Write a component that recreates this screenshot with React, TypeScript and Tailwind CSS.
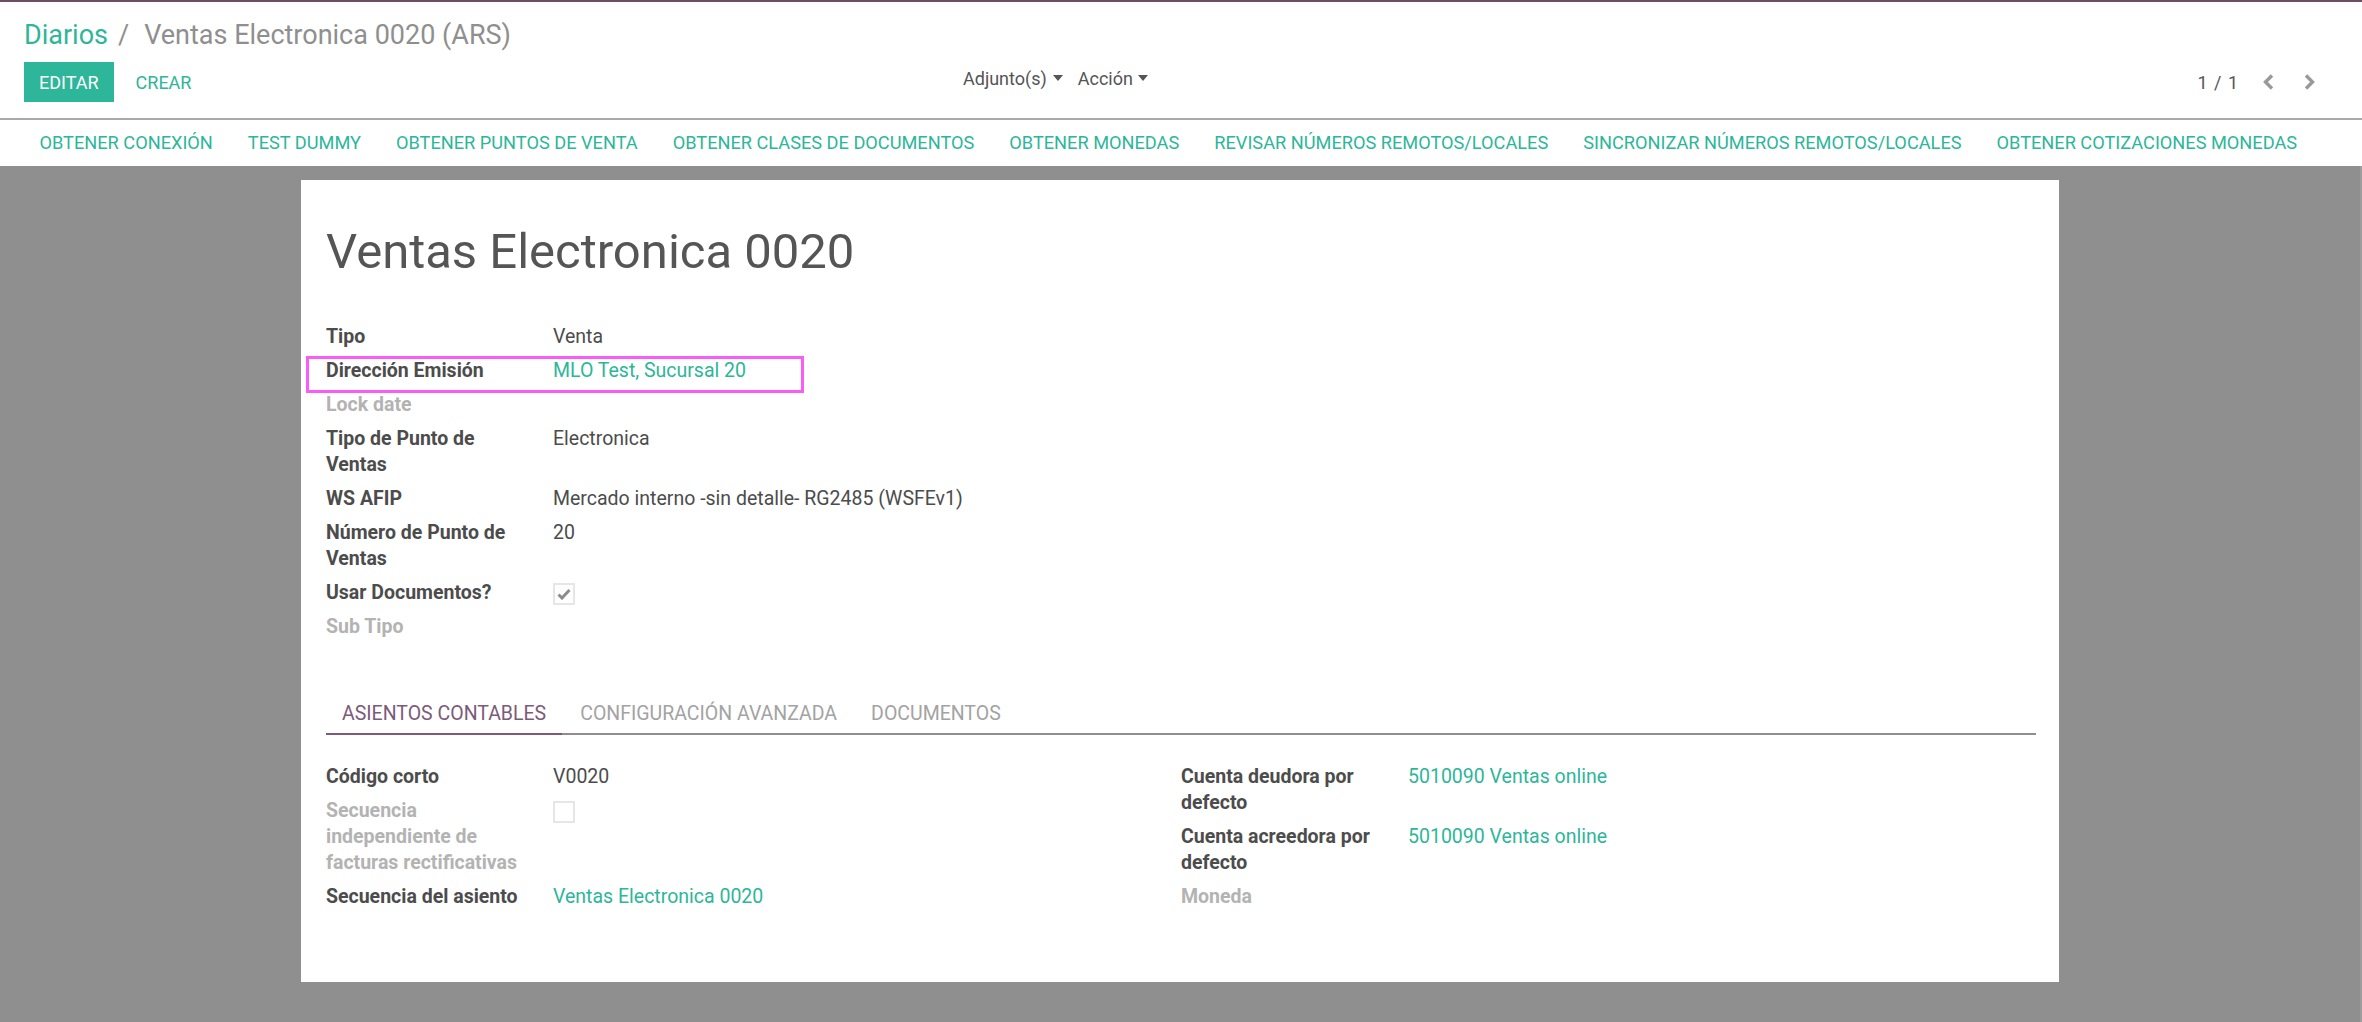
import React from 'react';

type FieldProps = {
  label: string[];
  muted?: boolean;
  children?: React.ReactNode;
};

// one form row: bold label column + value column (labels carry their own line breaks)
function Field({ label, muted, children }: FieldProps) {
  return (
    <div className="flex py-[4px] leading-[26px]">
      <div className={`w-[227px] shrink-0 pr-[20px] font-bold ${muted ? 'text-[#b3b3b3]' : 'text-[#4c4c4c]'}`}>
        {label.map((l) => (
          <div key={l} className="whitespace-nowrap">{l}</div>
        ))}
      </div>
      <div className="flex-1 text-[#4c4c4c]">{children}</div>
    </div>
  );
}

function Check({ checked }: { checked?: boolean }) {
  return (
    <div className="mt-[3px] flex h-[22px] w-[22px] items-center justify-center border-2 border-[#e6e6e6] bg-white">
      {checked && (
        <svg width="14" height="12" viewBox="0 0 14 12">
          <path d="M1.5 6.5 L5 10 L12.5 2" fill="none" stroke="#8c8c8c" strokeWidth="3" />
        </svg>
      )}
    </div>
  );
}

function Caret() {
  return (
    <svg width="10" height="6" viewBox="0 0 10 6" className="inline-block">
      <path d="M0 0 L10 0 L5 6 Z" fill="#555" />
    </svg>
  );
}

function Chevron({ dir }: { dir: 'left' | 'right' }) {
  return (
    <svg width="11" height="16" viewBox="0 0 11 16">
      <path
        d={dir === 'left' ? 'M9 1.5 L2.5 8 L9 14.5' : 'M2 1.5 L8.5 8 L2 14.5'}
        fill="none"
        stroke="#999"
        strokeWidth="3.4"
      />
    </svg>
  );
}

const actions = [
  'OBTENER CONEXIÓN',
  'TEST DUMMY',
  'OBTENER PUNTOS DE VENTA',
  'OBTENER CLASES DE DOCUMENTOS',
  'OBTENER MONEDAS',
  'REVISAR NÚMEROS REMOTOS/LOCALES',
  'SINCRONIZAR NÚMEROS REMOTOS/LOCALES',
  'OBTENER COTIZACIONES MONEDAS',
];

const link = 'text-[#2db699]';

export default function App() {
  return (
    <div className="flex h-[1022px] w-[2362px] flex-col overflow-hidden bg-white font-['Roboto',sans-serif] text-[18px] text-[#4c4c4c]">
      <div className="h-[2px] bg-[#6d4c64]" />

      {/* control panel */}
      <div className="pl-[24px] pt-[18px]">
        <div className="text-[27px] leading-[30px]">
          <span className={link}>Diarios</span>
          <span className="pl-[10px] pr-[15px] text-[#8f8f8f]">/</span>
          <span className="text-[#8f8f8f]">Ventas Electronica 0020 (ARS)</span>
        </div>
        <div className="mt-[12px] flex h-[40px] items-center">
          <div className="flex w-[939px] items-center">
            <button className="h-[40px] bg-[#2db699] px-[15px] text-white">EDITAR</button>
            <button className={`ml-[7px] h-[40px] px-[15px] ${link}`}>CREAR</button>
          </div>
          <div className="-mt-[8px] flex items-center text-[#555]">
            <span>Adjunto(s)</span>
            <span className="ml-[6px] mr-[15px] flex"><Caret /></span>
            <span>Acción</span>
            <span className="ml-[5px] flex"><Caret /></span>
          </div>
          <div className="ml-auto flex items-center pr-[47px] text-[#555]">
            <span className="tracking-[1px]">1 / 1</span>
            <span className="ml-[24px]"><Chevron dir="left" /></span>
            <span className="ml-[30px]"><Chevron dir="right" /></span>
          </div>
        </div>
      </div>

      <div className="mt-[16px] h-[2px] bg-[#a9a9a9]" />

      {/* statusbar buttons */}
      <div className="flex h-[46px] items-center pl-[22px]">
        {actions.map((a) => (
          <button key={a} className={`px-[17.5px] text-[18.2px] ${link}`}>{a}</button>
        ))}
      </div>

      {/* sheet */}
      <div className="flex-1 border-r-2 border-[#9d9d9d] bg-[#8f8f8f] pt-[14px]">
        <div className="mx-auto h-[802px] w-[1758px] bg-white pl-[25px] pr-[23px] pt-[44px] text-[19.5px]">
          <h1 className="text-[49px] leading-[56px] text-[#555]">Ventas Electronica 0020</h1>

          <div className="relative mt-[40px] w-[855px]">
            <Field label={['Tipo']}>Venta</Field>
            <Field label={['Dirección Emisión']}><span className={link}>MLO Test, Sucursal 20</span></Field>
            <Field label={['Lock date']} muted />
            <Field label={['Tipo de Punto de', 'Ventas']}>Electronica</Field>
            <Field label={['WS AFIP']}>Mercado interno -sin detalle- RG2485 (WSFEv1)</Field>
            <Field label={['Número de Punto de', 'Ventas']}>20</Field>
            <Field label={['Usar Documentos?']}><Check checked /></Field>
            <Field label={['Sub Tipo']} muted />
            <div className="pointer-events-none absolute left-[-20px] top-[36px] h-[37px] w-[498px] border-[3px] border-[#fb5cf8]" />
          </div>

          {/* notebook */}
          <div className="mt-[51px] flex border-b-2 border-[#8e8e8e]">
            <div className="-mb-[2px] border-b-2 border-[#7c5a79] px-[16px] py-[6px] leading-[26px] text-[#7c5a79]">ASIENTOS CONTABLES</div>
            <div className="ml-[2px] px-[16px] py-[6px] leading-[26px] text-[#a3a3a3]">CONFIGURACIÓN AVANZADA</div>
            <div className="ml-[2px] px-[16px] py-[6px] leading-[26px] text-[#a3a3a3]">DOCUMENTOS</div>
          </div>

          <div className="mt-[25px] grid grid-cols-2">
            <div>
              <Field label={['Código corto']}>V0020</Field>
              <Field label={['Secuencia', 'independiente de', 'facturas rectificativas']} muted><Check /></Field>
              <Field label={['Secuencia del asiento']}><span className={link}>Ventas Electronica 0020</span></Field>
            </div>
            <div>
              <Field label={['Cuenta deudora por', 'defecto']}><span className={link}>5010090 Ventas online</span></Field>
              <Field label={['Cuenta acreedora por', 'defecto']}><span className={link}>5010090 Ventas online</span></Field>
              <Field label={['Moneda']} muted />
            </div>
          </div>
        </div>
      </div>
    </div>
  );
}
